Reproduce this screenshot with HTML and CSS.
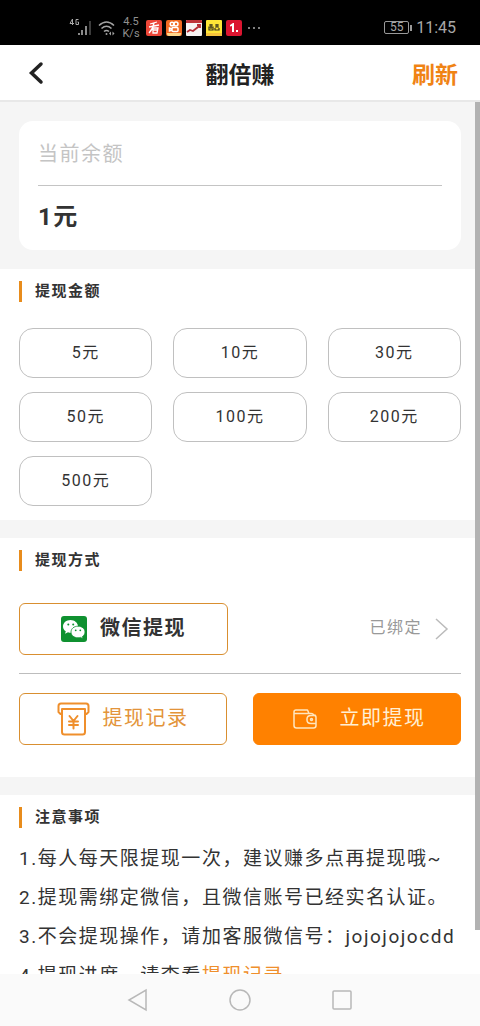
FILE: index.html
```html
<!DOCTYPE html>
<html lang="zh-CN">
<head>
<meta charset="utf-8">
<meta name="viewport" content="width=device-width, initial-scale=1">
<title>翻倍赚</title>
<link rel="stylesheet" href="styles.css">
</head>
<body>
<div class="status">
  <div class="status-left">
    <svg width="24" height="20" viewBox="0 0 24 20" fill="#8a8a8a">
      <path d="M3.500 7V1L1 5.500h4M9.500 1.500H7v5h2.500V4H8.500" fill="none" stroke="#aaa"/>
      <path d="M9 15h2v2H9zM12 12h2v5h-2zM16 8h2v9h-2z"/>
      <path d="M20 3h2v14h-2z" fill="#3c3c3c"/>
    </svg>
    <svg class="wifi" width="18" height="16" viewBox="0 0 18 16" fill="none" stroke="#a4a4a4" stroke-width="1.600">
      <path d="M1 5.500Q8.500-1.500 16 5.500M3.500 8.500Q8.500 4 13.500 8.500M6 11.500Q8.500 9.500 11 11.500"/>
      <circle cx="8.500" cy="14" r="1" fill="#a4a4a4" stroke="none"/>
      <path d="M13 11.500L11 13.500l2 2zM14.500 11.500l2 2-2 2z" fill="#a4a4a4" stroke="none"/>
    </svg>
    <span class="speed"><span>4.5</span><span>K/s</span></span>
    <span class="apps">
      <svg width="16" height="16" viewBox="0 0 16 16"><rect width="16" height="16" rx="2" fill="#ec4638"/><path d="M11 2L4 4M3 7l10-2M8 3C7 8 5 11 3 13M7 8h5l-1 5H7zM7 10h5" fill="none" stroke="#fff" stroke-width="1.300"/></svg>
      <svg width="16" height="16" viewBox="0 0 16 16"><rect width="16" height="16" rx="2" fill="#f26a22"/><path d="M1 13h14v1q0 2-2 2H3q-2 0-2-2z" fill="#ffd68a"/><g fill="none" stroke="#fff" stroke-width="1.500"><circle cx="6" cy="4" r="1.800"/><circle cx="10" cy="4" r="2"/><rect x="6" y="7.500" width="6" height="4" rx="1"/><path d="M6 9L3.500 8v3L6 10"/></g></svg>
      <svg width="16" height="16" viewBox="0 0 16 16"><rect width="16" height="16" rx="1" fill="#f7f3f2"/><path d="M0 3V1q0-1 1-1h14q1 0 1 1v2z" fill="#bf3439"/><path d="M1 12l3-2 3 1 5-4 2-2M11 5h3v3" fill="none" stroke="#b52d35" stroke-width="1.800"/></svg>
      <svg width="16" height="16" viewBox="0 0 16 16"><rect width="16" height="16" rx="1" fill="#ffe637"/><path d="M0 13h16v3H0z" fill="#f6c33b"/><path d="M3 5h4M5 4v5M3 7h4v3H3zM9 5h4M9 7h4M11 4v3M9 8v2h4V8" fill="none" stroke="#39351d" stroke-width="1.200"/></svg>
      <svg width="16" height="16" viewBox="0 0 16 16"><rect width="16" height="16" rx="2" fill="#db1530"/><path d="M4 5l3-2h1v9H6V6L4 6.500zM10 10h2v2h-2z" fill="#fff"/></svg>
    </span>
    <svg class="more" width="14" height="4" viewBox="0 0 14 4" fill="#aaa"><circle cx="2" cy="2" r="1"/><circle cx="7" cy="2" r="1"/><circle cx="12" cy="2" r="1"/></svg>
  </div>
  <div class="status-right">
    <span class="battery">55</span>
    <time>11:45</time>
  </div>
</div>

<header class="header">
  <button class="back" type="button" aria-label="返回">
    <svg width="16" height="24" viewBox="0 0 16 24" fill="none" stroke="#222" stroke-width="3.500" stroke-linecap="round"><path d="M13 3L3.500 12 13 21"/></svg>
  </button>
  <h1 class="title">翻倍赚</h1>
  <button class="refresh" type="button">刷新</button>
</header>

<main class="content">
  <div class="scrollbar"></div>
  <section class="balance">
    <div class="card">
      <p class="balance-label">当前余额</p>
      <p class="balance-value">1元</p>
    </div>
  </section>

  <section class="section">
    <h2 class="section-title">提现金额</h2>
    <div class="amounts">
      <button class="amount" type="button">5元</button>
      <button class="amount" type="button">10元</button>
      <button class="amount" type="button">30元</button>
      <button class="amount" type="button">50元</button>
      <button class="amount" type="button">100元</button>
      <button class="amount" type="button">200元</button>
      <button class="amount" type="button">500元</button>
    </div>
  </section>

  <section class="section methods">
    <h2 class="section-title">提现方式</h2>
    <div class="method-row">
      <button class="action wechat" type="button">
        <svg width="26" height="26" viewBox="0 0 26 26">
          <rect width="26" height="26" rx="3" fill="#0f9130"/>
          <path d="M9.500 4C5.400 4 2 6.800 2 10.400c0 2 1.100 3.700 2.800 4.900L4 17.800l3-1.500q1.500.5 3 .5c4.500 0 7-2.900 7-6.400S13.600 4 9.500 4z" fill="#fff"/>
          <path d="M17 10.200c-4 0-7 2.500-7 5.800s3 5.800 7 5.800q1.300 0 2.500-.4l2.600 1.400-.7-2.200c1.600-1.100 2.600-2.700 2.600-4.600 0-3.300-3-5.800-7-5.800z" fill="#fff" stroke="#0f9130" stroke-width=".8"/>
          <g fill="#0f9130"><circle cx="7.300" cy="8.500" r="1"/><circle cx="12.200" cy="8.500" r="1"/><circle cx="14.700" cy="14.300" r=".9"/><circle cx="19.300" cy="14.300" r=".9"/></g>
        </svg>
        <span class="label">微信提现</span>
      </button>
      <button class="bound" type="button">
        <span class="label">已绑定</span>
        <svg width="14" height="24" viewBox="0 0 14 24" fill="none" stroke="#bbb" stroke-width="1.500"><path d="M1 2l11 10L1 22"/></svg>
      </button>
    </div>
    <div class="actions">
      <button class="action record" type="button">
        <svg width="33" height="34" viewBox="0 0 33 34" fill="none" stroke="#ef8f2c" stroke-width="2" stroke-linejoin="round" stroke-linecap="round">
          <path d="M5 12H3.500L1.500 10V4q0-2.500 2.500-2.500h25Q31.500 1.500 31.500 4v6l-2 2H28"/>
          <path d="M5 7h23v23q0 2.500-2.500 2.500h-18Q5 32.500 5 30z"/>
          <path d="M12.500 14l4 5 4-5M12 19.500h9M12 23h9M16.500 19v7.500"/>
        </svg>
        <span class="label">提现记录</span>
      </button>
      <button class="action submit" type="button">
        <svg width="24" height="20" viewBox="0 0 24 20" fill="none" stroke="#ffe6bf" stroke-width="1.500" stroke-linejoin="round">
          <path d="M16 4.500L14.500 1H3Q1 1 1 3v13.500Q1 19 3.500 19h17q2.500 0 2.500-2.500V8.500Q23 6 20.500 6M1 4.500h17q2.500 0 2.500 2"/>
          <path d="M23 6.500h-5q-4 0-4 3.500v1q0 3.500 4 3.500h5"/>
          <circle cx="18.500" cy="10.500" r="1"/>
        </svg>
        <span class="label">立即提现</span>
      </button>
    </div>
  </section>

  <section class="section notes">
    <h2 class="section-title">注意事项</h2>
    <p>1.每人每天限提现一次，建议赚多点再提现哦~</p>
    <p>2.提现需绑定微信，且微信账号已经实名认证。</p>
    <p>3.不会提现操作，请加客服微信号：jojojojocdd</p>
    <p>4.提现进度，请查看<a href="#records">提现记录</a></p>
  </section>
</main>

<nav class="navbar">
  <button type="button" aria-label="后退"><svg width="24" height="24" viewBox="0 0 24 24"><path d="M20 2v20L3 12z"/></svg></button>
  <button type="button" aria-label="主页"><svg width="24" height="24" viewBox="0 0 24 24"><circle cx="12" cy="12" r="10"/></svg></button>
  <button type="button" aria-label="最近任务"><svg width="24" height="24" viewBox="0 0 24 24"><rect x="3" y="3" width="18" height="18" rx="1"/></svg></button>
</nav>
</body>
</html>
```
FILE: styles.css
```css
* {
  box-sizing: border-box;
}

body {
  margin: 0;
  height: 100vh;
  display: flex;
  flex-direction: column;
  overflow: hidden;
  background: #fff;
  color: #333;
  font-family: Roboto, "Noto Sans CJK SC", sans-serif;
  font-size: 19px;
  letter-spacing: 0.08em;
}

h1, h2, p {
  margin: 0;
}

button {
  margin: 0;
  padding: 0;
  border: 0;
  background: none;
  color: inherit;
  font: inherit;
  letter-spacing: inherit;
  cursor: pointer;
}

svg {
  display: block;
  flex: none;
}

/* Status bar */
.status {
  flex: none;
  display: flex;
  justify-content: space-between;
  height: 45px;
  padding: 10px 24px 0 69px;
  background: #000;
  color: #a8a8a8;
  letter-spacing: 0;
}

.status-left,
.status-right,
.apps {
  display: flex;
  align-items: center;
}

.wifi {
  margin-left: 5px;
}

.speed {
  display: flex;
  flex-direction: column;
  align-items: center;
  width: 18px;
  margin: 0 6px;
  font-size: 11px;
  line-height: 12px;
  color: #909090;
}

.apps {
  gap: 4px;
}

.more {
  margin-left: 5px;
}

.status-right {
  gap: 7px;
  font-size: 16px;
}

.battery {
  position: relative;
  width: 25px;
  height: 13px;
  border: 1px solid #999;
  border-radius: 2px;
  font-size: 12px;
  line-height: 11px;
  text-align: center;
}

.battery::after {
  content: "";
  position: absolute;
  top: 3px;
  right: -4px;
  width: 2px;
  height: 6px;
  background: #999;
}

/* Page header */
.header {
  flex: none;
  display: grid;
  grid-template-columns: 1fr auto 1fr;
  align-items: center;
  height: 57px;
  padding: 0 22px;
  border-bottom: 2px solid #e8e8e8;
  font-size: 23px;
  font-weight: 700;
  letter-spacing: 0;
}

.back {
  justify-self: start;
  padding: 0 6px;
}

.title {
  font-size: 23px;
  color: #222;
}

.refresh {
  justify-self: end;
  color: #f08314;
}

/* Scrolling content */
.content {
  position: relative;
  flex: 1;
  min-height: 0;
  overflow: hidden;
}

.scrollbar {
  position: absolute;
  top: 0;
  right: 0;
  width: 5px;
  height: 95%;
  background: #b2b2b2;
}

.balance {
  padding: 19px;
  background: #f5f5f5;
}

.card {
  padding: 12px 19px;
  border-radius: 14px;
  background: #fff;
}

.balance-label {
  padding-bottom: 10px;
  border-bottom: 1px solid #c4c4c4;
  color: #c4c4c4;
  font-size: 20px;
  line-height: 42px;
}

.balance-value {
  padding-top: 10px;
  font-size: 24px;
  font-weight: 700;
  line-height: 42px;
}

.section {
  padding: 12px 19px 14px;
}

.section + .section {
  border-top: 18px solid #f5f5f5;
}

.section-title {
  padding-left: 13px;
  border-left: 3px solid #e88c1c;
  font-size: 15px;
  font-weight: 700;
  line-height: 21px;
}

.amounts {
  display: grid;
  grid-template-columns: repeat(3, 1fr);
  gap: 14px 21px;
  padding-top: 26px;
}

.amount {
  height: 50px;
  padding-bottom: 5px;
  border: 1px solid #c0c0c0;
  border-radius: 14px;
  font-size: 16px;
}

.methods {
  padding-bottom: 32px;
}

.method-row {
  display: flex;
  align-items: center;
  justify-content: space-between;
  padding: 32px 0 18px;
  border-bottom: 1px solid #bdbdbd;
}

.action {
  display: flex;
  align-items: center;
  justify-content: center;
  height: 52px;
  border: 1px solid #d98f30;
  border-radius: 6px;
  font-size: 20px;
}

.label {
  padding-bottom: 6px;
}

.wechat {
  gap: 13px;
  width: 209px;
  font-weight: 700;
}

.bound {
  display: flex;
  align-items: center;
  gap: 13px;
  padding-right: 12px;
  color: #999;
  font-size: 16px;
}

.actions {
  display: grid;
  grid-template-columns: 1fr 1fr;
  gap: 26px;
  padding-top: 19px;
}

.record {
  gap: 12px;
  color: #e3943a;
}

.submit {
  gap: 22px;
  padding-left: 5px;
  border-color: #ff8100;
  background: #ff8100;
  color: #fff0d4;
}

.notes .section-title {
  margin-bottom: 11px;
}

.notes p {
  line-height: 39px;
  white-space: nowrap;
}

.notes a {
  color: #ef8f2c;
  text-decoration: none;
}

/* System navigation */
.navbar {
  flex: none;
  display: flex;
  justify-content: center;
  gap: 78px;
  height: 52px;
  background: #fafafa;
}

.navbar svg {
  fill: none;
  stroke: #b8b8b8;
  stroke-width: 1.5;
}
```
